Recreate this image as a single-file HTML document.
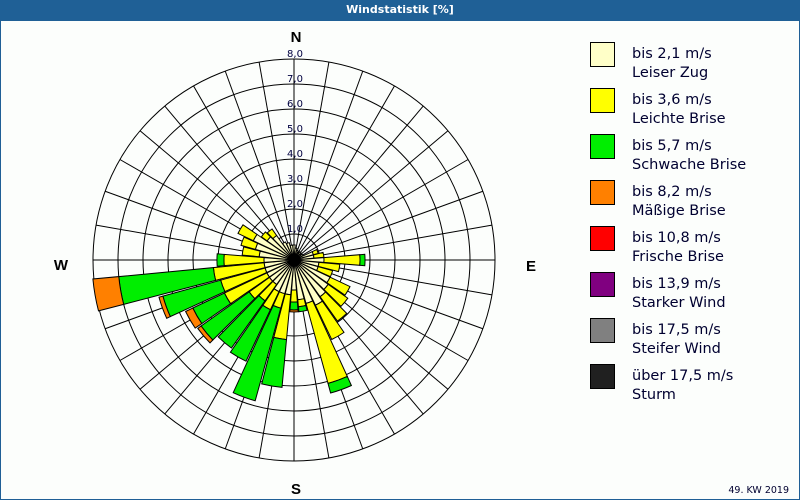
<!DOCTYPE html>
<html><head><meta charset="utf-8"><style>
html,body{margin:0;padding:0}
body{width:800px;height:500px;overflow:hidden;background:#fcfefc;font-family:"DejaVu Sans","Liberation Sans",sans-serif;position:relative}
#frame{position:absolute;left:0;top:0;width:798px;height:498px;border:1px solid #1f5f96}
#title{position:absolute;left:0;top:0;width:800px;height:21px;background:#1f6096;color:#fff;font:bold 11px "DejaVu Sans",sans-serif;text-align:center;line-height:20px}
.sq{position:absolute;left:590px;width:23px;height:23px;border:1px solid #000}
.lt{position:absolute;left:632px;font-size:14.5px;line-height:19px;color:#000030}
#foot{position:absolute;right:11px;top:485px;font-size:9.5px;color:#000030}
</style></head><body>
<div id="frame"></div>
<div id="title">Windstatistik [%]</div>
<svg id="rose" width="800" height="500" style="position:absolute;left:0;top:0"></svg>
<div class="sq" style="top:42px;background:#ffffc8"></div><div class="lt" style="top:45px">bis 2,1 m/s<br>Leiser Zug</div>
<div class="sq" style="top:88px;background:#ffff00"></div><div class="lt" style="top:91px">bis 3,6 m/s<br>Leichte Brise</div>
<div class="sq" style="top:134px;background:#00ee00"></div><div class="lt" style="top:137px">bis 5,7 m/s<br>Schwache Brise</div>
<div class="sq" style="top:180px;background:#ff8000"></div><div class="lt" style="top:183px">bis 8,2 m/s<br>Mäßige Brise</div>
<div class="sq" style="top:226px;background:#ff0000"></div><div class="lt" style="top:229px">bis 10,8 m/s<br>Frische Brise</div>
<div class="sq" style="top:272px;background:#800080"></div><div class="lt" style="top:275px">bis 13,9 m/s<br>Starker Wind</div>
<div class="sq" style="top:318px;background:#808080"></div><div class="lt" style="top:321px">bis 17,5 m/s<br>Steifer Wind</div>
<div class="sq" style="top:364px;background:#202020"></div><div class="lt" style="top:367px">über 17,5 m/s<br>Sturm</div>
<div id="foot">49. KW 2019</div>
<script>
var cx=294,cy=260,s='';
for(var k=1;k<=8;k++){s+='<circle cx="'+cx+'" cy="'+cy+'" r="'+(25*k+1)+'" fill="none" stroke="#000" stroke-width="1"/>';}
for(var a=0;a<360;a+=10){var t=a*Math.PI/180;s+='<line x1="'+cx+'" y1="'+cy+'" x2="'+(cx+201*Math.sin(t))+'" y2="'+(cy-201*Math.cos(t))+'" stroke="#000" stroke-width="1"/>';}
var cols=['#ffffc8','#ffff00','#00ee00','#ff8000'];
var d={0:[15],10:[12],20:[10],30:[8],40:[10],50:[8],60:[10],70:[20,25],80:[20,30],90:[30,66,71],100:[25,46],110:[25,40],120:[40,62],130:[42,66],140:[45,75],150:[50,88],160:[45,128,138],170:[40,47,52],180:[30,42,50,52],190:[35,80,128],200:[35,50,146],210:[35,55,112],220:[30,50,108],230:[30,55,114,118],240:[30,77,112,120],250:[30,76,136,140],260:[30,81,176,202],270:[30,70,77],280:[35,52],290:[40,55],300:[45,62],310:[33,40],320:[30,38],330:[20],340:[18],350:[15]};
function P(r,a){var t=a*Math.PI/180;return (cx+r*Math.sin(t)).toFixed(1)+','+(cy-r*Math.cos(t)).toFixed(1);}
for(var a in d){var v=d[a],r0=0;a=+a;for(var i=0;i<v.length;i++){var r1=v[i],a0=a-4.6,a1=a+4.6;
s+='<path d="M'+P(r0,a0)+' L'+P(r1,a0)+' A'+r1+','+r1+' 0 0 1 '+P(r1,a1)+' L'+P(r0,a1)+(r0>0?' A'+r0+','+r0+' 0 0 0 '+P(r0,a0):'')+' Z" fill="'+cols[i]+'" stroke="#000" stroke-width="1"/>';r0=r1;}}
s+='<circle cx="'+cx+'" cy="'+cy+'" r="5" fill="#000"/>';
var lab=['1,0','2,0','3,0','4,0','5,0','6,0','7,0','8,0'];
for(var k=1;k<=8;k++){s+='<text x="'+(cx+1)+'" y="'+(cy-25*k-3)+'" font-size="10" fill="#000040" text-anchor="middle" font-family="DejaVu Sans,sans-serif">'+lab[k-1]+'</text>';}
s+='<g font-family="Liberation Sans,sans-serif" font-weight="bold" font-size="15" fill="#000" text-anchor="middle"><text x="296" y="42">N</text><text x="61" y="270">W</text><text x="531" y="271">E</text><text x="296" y="494">S</text></g>';
document.getElementById('rose').innerHTML=s;
</script>
</body></html>
